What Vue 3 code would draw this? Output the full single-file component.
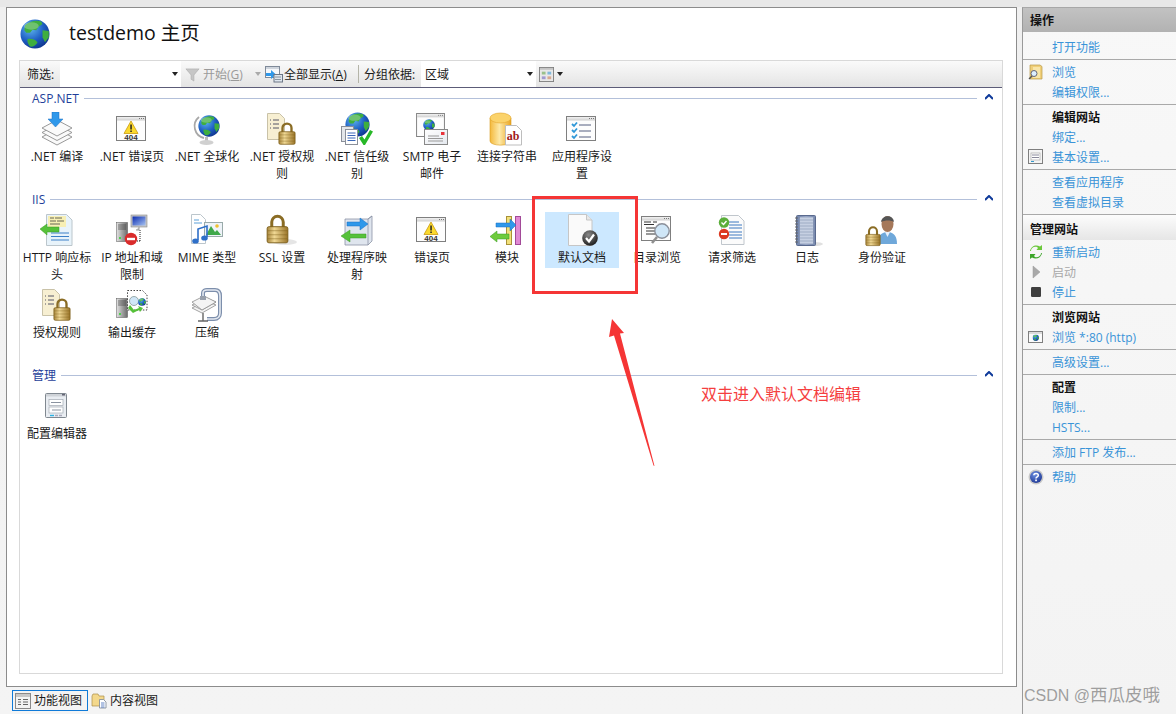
<script setup>
const groups = [
  { title: 'ASP.NET', items: [
    ['.NET 编译', 'compile'], ['.NET 错误页', 'err'], ['.NET 全球化', 'globestand'], ['.NET 授权规则', 'doclock'],
    ['.NET 信任级别', 'trust'], ['SMTP 电子邮件', 'smtp'], ['连接字符串', 'conn'], ['应用程序设置', 'appset'],
  ] },
  { title: 'IIS', items: [
    ['HTTP 响应标头', 'http'], ['IP 地址和域限制', 'ip'], ['MIME 类型', 'mime'], ['SSL 设置', 'ssl'],
    ['处理程序映射', 'handler'], ['错误页', 'err'], ['模块', 'module'], ['默认文档', 'defdoc', true],
    ['目录浏览', 'dirbrowse'], ['请求筛选', 'reqfilter'], ['日志', 'log'], ['身份验证', 'auth'],
    ['授权规则', 'doclock'], ['输出缓存', 'cache'], ['压缩', 'compress'],
  ] },
  { title: '管理', items: [['配置编辑器', 'config']] },
]
const actions = [
  { rows: [{ t: '打开功能' }] },
  { rows: [{ t: '浏览', i: 'a-folder' }, { t: '编辑权限...' }] },
  { rows: [{ t: '编辑网站', b: 1 }, { t: '绑定...' }, { t: '基本设置...', i: 'a-settings' }] },
  { rows: [{ t: '查看应用程序' }, { t: '查看虚拟目录' }] },
  { band: '管理网站', rows: [{ t: '重新启动', i: 'a-restart' }, { t: '启动', i: 'a-play', g: 1 }, { t: '停止', i: 'a-stop' }] },
  { rows: [{ t: '浏览网站', b: 1 }, { t: '浏览 *:80 (http)', i: 'a-browse' }] },
  { rows: [{ t: '高级设置...' }] },
  { rows: [{ t: '配置', b: 1 }, { t: '限制...' }, { t: 'HSTS...' }] },
  { rows: [{ t: '添加 FTP 发布...' }] },
  { rows: [{ t: '帮助', i: 'a-help' }], last: true },
]
</script>

<template>
  <svg class="defs" width="0" height="0" aria-hidden="true">
    <defs>
      <radialGradient id="gGlobe" cx="0.35" cy="0.3" r="0.8"><stop offset="0" stop-color="#5fb6ee"/><stop offset="0.55" stop-color="#1f5fc4"/><stop offset="1" stop-color="#0d2f86"/></radialGradient>
      <linearGradient id="gGold" x1="0" y1="0" x2="1" y2="0"><stop offset="0" stop-color="#a8863c"/><stop offset="0.35" stop-color="#f0d894"/><stop offset="1" stop-color="#9a7428"/></linearGradient>
      <linearGradient id="gCyl" x1="0" y1="0" x2="1" y2="0"><stop offset="0" stop-color="#f4b93c"/><stop offset="0.45" stop-color="#fde9a8"/><stop offset="1" stop-color="#eba51f"/></linearGradient>
      <linearGradient id="gPaper" x1="0" y1="0" x2="1" y2="1"><stop offset="0" stop-color="#ffffff"/><stop offset="1" stop-color="#e4e8ee"/></linearGradient>
      <linearGradient id="gBar" x1="0" y1="0" x2="0" y2="1"><stop offset="0" stop-color="#f2f2f2"/><stop offset="1" stop-color="#cfcfcf"/></linearGradient>
      <linearGradient id="gServer" x1="0" y1="0" x2="1" y2="0"><stop offset="0" stop-color="#e4e4e4"/><stop offset="0.5" stop-color="#a4a4a4"/><stop offset="1" stop-color="#6c6c6c"/></linearGradient>
      <linearGradient id="gBook" x1="0" y1="0" x2="1" y2="0"><stop offset="0" stop-color="#6b7fa8"/><stop offset="0.5" stop-color="#a9b7d2"/><stop offset="1" stop-color="#7587ad"/></linearGradient>
      <linearGradient id="gMono" x1="0" y1="0" x2="1" y2="1"><stop offset="0" stop-color="#0a2bb0"/><stop offset="1" stop-color="#a8c4f2"/></linearGradient>
      <radialGradient id="gBadge" cx="0.4" cy="0.3" r="0.8"><stop offset="0" stop-color="#8a8a8a"/><stop offset="1" stop-color="#111"/></radialGradient>
      <radialGradient id="gHelp" cx="0.4" cy="0.3" r="0.8"><stop offset="0" stop-color="#6c8fe0"/><stop offset="1" stop-color="#17308f"/></radialGradient>
    </defs>

    <symbol id="globe" viewBox="0 0 24 24">
      <circle cx="12" cy="12" r="11.6" fill="url(#gGlobe)"/>
      <path d="M4 5c3-3 9-4.500 13-3l1 2-3 2-2 3-3-.5-2 2.500-3 0-1.500-2z" fill="#3fae3f"/>
      <path d="M6 16c3-.5 7 .5 8 3-2 2.500-4 3.500-6 3-1.500-2-2.500-4-2-6z" fill="#3fae3f"/>
      <path d="M18 9l5 .5 0 5-3 4-2-4z" fill="#3fae3f"/>
      <ellipse cx="9" cy="5.500" rx="6" ry="3" fill="#fff" opacity=".25"/>
    </symbol>
    <symbol id="lock" viewBox="0 0 20 26">
      <path d="M5 12V7a5 5 0 0 1 10 0v5" fill="none" stroke="#8a6c24" stroke-width="2.600"/>
      <rect x="1" y="11" width="18" height="14" rx="1.500" fill="url(#gGold)" stroke="#7a5c16" stroke-width=".8"/>
      <path d="M1.500 14.500h17M1.500 18h17M1.500 21.500h17" stroke="#7a5c16" stroke-width=".7" opacity=".55"/>
    </symbol>
    <symbol id="win" viewBox="0 0 30 25">
      <rect x=".5" y=".5" width="29" height="24" fill="#fdfdfd" stroke="#7f7f7f"/>
      <rect x="1" y="1" width="28" height="3.500" fill="url(#gBar)"/>
      <path d="M23 2.500h1M25 2.500h1M27 2.500h1" stroke="#777"/>
    </symbol>
    <symbol id="err" viewBox="0 0 36 36">
      <use href="#win" x="2" y="4" width="30" height="25"/>
      <path d="M17 9l7 12.500H10z" fill="#fbd92e" stroke="#c99a10" stroke-width=".8"/>
      <rect x="16.300" y="12.500" width="1.500" height="5" fill="#222"/><rect x="16.300" y="18.500" width="1.500" height="1.500" fill="#222"/>
    </symbol>
    <symbol id="compile" viewBox="0 0 36 36">
      <g fill="#fafafa" stroke="#8d8d8d" stroke-width=".9">
        <path d="M3 25l15-8 15 8-15 8z"/><path d="M3 20.500l15-8 15 8-15 8z"/><path d="M3 16l15-8 15 8-15 8z"/>
      </g>
      <path d="M13 0h7v7h4l-7.500 8L9 7h4z" fill="#2f98ea" stroke="#1a6fc0" stroke-width=".5"/>
    </symbol>
    <symbol id="globestand" viewBox="0 0 36 36">
      <path d="M10 5a12 12 0 0 0 5 21" fill="none" stroke="#a8a8a8" stroke-width="1.800"/>
      <rect x="16" y="25" width="3" height="4" fill="#bdbdbd"/><ellipse cx="17.500" cy="30.500" rx="7" ry="2.500" fill="#d0d0d0"/>
      <use href="#globe" x="9" y="3" width="22" height="22"/>
    </symbol>
    <symbol id="doclock" viewBox="0 0 36 36">
      <path d="M3.500 1.500h12l5 5v21h-17z" fill="#f7efd2" stroke="#c9c2a8"/>
      <path d="M6 8h1M6 12h1M6 16h1M9 8h6M9 12h6M9 16h6" stroke="#556" stroke-width="1"/>
      <use href="#lock" x="14" y="9" width="18" height="25"/>
    </symbol>
    <symbol id="trust" viewBox="0 0 36 36">
      <use href="#globe" x="6" y="0" width="25" height="25"/>
      <rect x="2.500" y="14.500" width="12" height="15" fill="#e3e6ea" stroke="#8a8f99"/>
      <rect x="6.500" y="17.500" width="12" height="15" fill="#fff" stroke="#8a8f99"/>
      <path d="M8.500 21h8M8.500 23.500h8M8.500 26h8M8.500 28.500h8" stroke="#3c68b8"/>
      <path d="M20 26l3-2 2.500 3.500L31 18l3 1.500L26 33h-1.500z" fill="#28b828"/>
    </symbol>
    <symbol id="smtp" viewBox="0 0 36 36">
      <use href="#win" x="2" y="1" width="29" height="24"/>
      <use href="#globe" x="9" y="7" width="12" height="12"/>
      <rect x="10.500" y="17.500" width="23" height="15" fill="url(#gPaper)" stroke="#888"/>
      <rect x="27" y="20" width="3.500" height="3" fill="#e8323a"/>
      <path d="M14 24h11M14 26.500h15M14 29h15" stroke="#999"/>
    </symbol>
    <symbol id="conn" viewBox="0 0 36 36">
      <path d="M1 6v23c0 5.500 21 5.500 21 0V6z" fill="url(#gCyl)" stroke="#d99b1e" stroke-width=".6"/>
      <ellipse cx="11.500" cy="6" rx="10.500" ry="5" fill="#fbd36b" stroke="#e3a52a" stroke-width=".6"/>
      <path d="M16.500 13.500h11l5 5v14.500h-16z" fill="#fff" stroke="#bdbdbd"/>
    </symbol>
    <symbol id="appset" viewBox="0 0 36 36">
      <use href="#win" x="2" y="4" width="30" height="25"/>
      <path d="M8 12l2 2 3-3.500M8 18l2 2 3-3.500M8 24l2 2 3-3.500" fill="none" stroke="#2f98d8" stroke-width="1.800"/>
      <path d="M15 13h12M15 19h12M15 25h12" stroke="#555e80"/>
    </symbol>
    <symbol id="http" viewBox="0 0 36 36">
      <path d="M7.500 1.500h20l5.500 5.500v25.500H7.500z" fill="#e8f3fa" stroke="#bcc6cc"/>
      <path d="M9 3h18v11H9z" fill="#f7efb4"/>
      <path d="M11 5h4M16 5h7M11 8h6M18 8h7M11 11h10" stroke="#665" stroke-width="1"/>
      <path d="M12 20h18M12 23.500h18M12 27h18" stroke="#3c80c8"/>
      <path d="M1 16l7-5v3h12v5H8v3z" fill="#56c13a" stroke="#3b9a24" stroke-width=".5"/>
    </symbol>
    <symbol id="server" viewBox="0 0 12 20">
      <rect x=".5" y=".5" width="11" height="19" fill="url(#gServer)" stroke="#555" stroke-width=".5"/>
      <path d="M2 3h8M2 5h8M2 7h8" stroke="#333" stroke-width=".6"/><rect x="3" y="15" width="2" height="2" fill="#4ed04e"/>
    </symbol>
    <symbol id="ip" viewBox="0 0 36 36">
      <use href="#server" x="2" y="9" width="12" height="20"/>
      <rect x="17" y="2" width="16" height="12" fill="#c8c8c8" stroke="#888" stroke-width=".6"/>
      <rect x="18.500" y="3.500" width="13" height="9" fill="url(#gMono)"/>
      <path d="M25 14v3h-3" fill="#ccc" stroke="#999"/>
      <path d="M26 17v11M13 28h13" stroke="#222" stroke-dasharray="1 1" fill="none"/>
      <circle cx="17" cy="26" r="6.200" fill="#d92b2b"/><rect x="13" y="24.800" width="8" height="2.400" fill="#fff"/>
    </symbol>
    <symbol id="mime" viewBox="0 0 36 36">
      <path d="M2.500 1.500h9l5 5v24h-14z" fill="#fff" stroke="#bcc6cc"/>
      <path d="M5 7h5M5 10h8" stroke="#5aa0d8"/>
      <rect x="15.500" y="9.500" width="18" height="14" fill="#eef3f8" stroke="#9aa"/>
      <path d="M17 22l5-9 4 6 2-2 4 5z" fill="#3fa84a"/><circle cx="28" cy="13" r="1.800" fill="#f0c030"/>
      <path d="M9 27V16l9-3v11" fill="none" stroke="#2e6fc8" stroke-width="1.600"/>
      <ellipse cx="6.500" cy="28" rx="3.300" ry="2.600" fill="#2e6fc8"/><ellipse cx="15.500" cy="25" rx="3.300" ry="2.600" fill="#2e6fc8"/>
    </symbol>
    <symbol id="ssl" viewBox="0 0 36 36">
      <ellipse cx="21" cy="29" rx="12" ry="3" fill="#000" opacity=".1"/>
      <use href="#lock" x="2" y="1" width="23" height="30"/>
    </symbol>
    <symbol id="handler" viewBox="0 0 36 36">
      <path d="M6 6h23l4-3v25l-4 4H6z" fill="#dfe5ee" stroke="#8a93a4" stroke-width=".8"/>
      <path d="M29 6v26M29 6l4-3" stroke="#8a93a4" fill="none" stroke-width=".8"/>
      <path d="M8 9h13V5l8 6-8 6v-4H8z" fill="#2f98ea" stroke="#1a6fc0" stroke-width=".5"/>
      <path d="M27 21H11v-4l-9 6 9 6v-4h16z" fill="#56c13a" stroke="#3b9a24" stroke-width=".5"/>
    </symbol>
    <symbol id="module" viewBox="0 0 36 36">
      <rect x="17.500" y="3.500" width="5" height="28" fill="#f2e07a" stroke="#a89238"/>
      <rect x="26.500" y="3.500" width="5" height="28" fill="#e089d4" stroke="#a24a98"/>
      <path d="M7 10h14V6l6 6-6 6v-4H7z" fill="#2f98ea" stroke="#1a6fc0" stroke-width=".5"/>
      <path d="M20 21H8v-3l-7 5.500L8 29v-3h12z" fill="#6ecb3c" stroke="#3b9a24" stroke-width=".5"/>
    </symbol>
    <symbol id="defdoc" viewBox="0 0 36 36">
      <path d="M4.500 1.500h18l5.500 5.500v25.500H4.500z" fill="#fafafa" stroke="#c6c6c6"/>
      <path d="M22.500 1.500v5.500H28" fill="#e8e8e8" stroke="#c6c6c6"/>
      <circle cx="26" cy="25" r="7.800" fill="url(#gBadge)"/>
      <path d="M22 25l3 3.500 5-7" fill="none" stroke="#fff" stroke-width="2.200"/>
    </symbol>
    <symbol id="dirbrowse" viewBox="0 0 36 36">
      <use href="#win" x="2" y="3" width="30" height="25"/>
      <path d="M5 9h7M14 9h4M5 11.500h10M7 15h9M7 18h9M7 21h9" stroke="#333"/>
      <circle cx="23" cy="18" r="7.200" fill="#cfe6f7" stroke="#8a8f99" stroke-width="1.400"/>
      <path d="M18 24l-5 6" stroke="#8f8f8f" stroke-width="2.600"/>
    </symbol>
    <symbol id="reqfilter" viewBox="0 0 36 36">
      <path d="M7.500 2.500h17l5.500 5.500v23.500H7.500z" fill="#fbfbfb" stroke="#c0c6cc"/>
      <path d="M15 9h10M15 12h13M15 15h13M15 19h13M15 22h13M15 25h13" stroke="#3c78c0"/>
      <circle cx="10" cy="9.500" r="5.200" fill="#5aae3a"/><path d="M7.500 9.500l2 2 3-3.500" fill="none" stroke="#fff" stroke-width="1.400"/>
      <circle cx="10" cy="21" r="5.200" fill="#dc3a22"/><rect x="7" y="20" width="6" height="2" fill="#fff"/>
    </symbol>
    <symbol id="log" viewBox="0 0 36 36">
      <ellipse cx="25" cy="31" rx="9" ry="2" fill="#000" opacity=".12"/>
      <rect x="7.500" y="2.500" width="19" height="30" rx="1" fill="url(#gBook)" stroke="#5a6a8e"/>
      <rect x="10.500" y="4" width="14" height="27" fill="#c6d0e2" stroke="#6a7a9e" stroke-width=".5"/>
      <path d="M11 7h13M11 10h13M11 13h13M11 16h13M11 19h13M11 22h13M11 25h13M11 28h13" stroke="#8594b4" stroke-width=".6"/>
      <path d="M6 5h3M6 8h3M6 11h3M6 14h3M6 17h3M6 20h3M6 23h3M6 26h3M6 29h3" stroke="#666" stroke-width="1"/>
    </symbol>
    <symbol id="auth" viewBox="0 0 36 36">
      <path d="M13 31c0-8 4-11 9-12h3c5 1 8 4 8 12z" fill="#6fa8da"/>
      <path d="M21 19l2.500 5 2.500-5z" fill="#e8f0fa"/>
      <ellipse cx="23.500" cy="11" rx="6" ry="8" fill="#a5785a"/>
      <path d="M17 9c1-7 12-8 13 0-3-2-9-2-13 0z" fill="#555"/>
      <use href="#lock" x="1" y="12" width="16" height="22"/>
    </symbol>
    <symbol id="cache" viewBox="0 0 36 36">
      <use href="#server" x="2" y="10" width="12" height="20"/>
      <path d="M13.500 2.500h15l4.500 4.500v15H13.500z" fill="#fff" stroke="#444" stroke-dasharray="1.500 1.500"/>
      <circle cx="20" cy="13" r="4.500" fill="#cfe6f7" stroke="#9aa"/>
      <use href="#globe" x="24" y="10" width="8" height="8"/>
      <path d="M16 17l4 5 5-2-1-2 5 2-3 4-1-2-6 3-5-5z" fill="#56c13a"/>
    </symbol>
    <symbol id="compress" viewBox="0 0 36 36">
      <g fill="#f4f4f4" stroke="#8d8d8d" stroke-width=".8"><path d="M3 20l14-7 10 4-14 8z"/><path d="M3 17l14-7 10 4-14 8z"/><path d="M3 14l12-6 12 6-14 8z"/></g>
      <path d="M14 9V5c0-2 2-3 4-3h8c4 0 5 3 5 6v17c0 3-2 6-6 6h-7" fill="none" stroke="#7d8fac" stroke-width="4"/>
      <path d="M14 9V5c0-2 2-3 4-3h8c4 0 5 3 5 6v17c0 3-2 6-6 6h-7" fill="none" stroke="#e4e9f1" stroke-width="1.600"/>
      <rect x="11" y="8" width="6" height="4" fill="#98a0ac"/>
      <path d="M14 25v8M9 33h10" stroke="#666" stroke-width="1.400"/>
    </symbol>
    <symbol id="config" viewBox="0 0 36 36">
      <rect x="6.500" y="4.500" width="21" height="24" rx="1" fill="#e9edf2" stroke="#808890"/>
      <rect x="7" y="5" width="20" height="2.500" fill="#cfd3d8"/><rect x="23" y="5" width="3" height="1.500" fill="#667"/>
      <rect x="10" y="10.500" width="14" height="6" fill="#fff" stroke="#a4abb4" stroke-width=".7"/>
      <rect x="10" y="18" width="14" height="6" fill="#fff" stroke="#a4abb4" stroke-width=".7"/>
      <path d="M12 13.500h10M13 21h9" stroke="#8a93a0"/>
      <path d="M11 26.500h4" stroke="#2db4e4" stroke-width="1.400"/><path d="M16 26.500h3M20 26.500h3" stroke="#aab" stroke-width="1.400"/>
    </symbol>

    <symbol id="a-folder" viewBox="0 0 16 16">
      <path d="M2 1h10l2 1.500V15H2z" fill="#f0cf78" stroke="#b89a48" stroke-width=".7"/>
      <path d="M5 3h7v11H5z" fill="#f9e6a8"/>
      <circle cx="6" cy="9.500" r="3" fill="#dcefff" stroke="#667" stroke-width="1"/>
      <path d="M4 12l-3 3" stroke="#555" stroke-width="1.500"/>
    </symbol>
    <symbol id="a-settings" viewBox="0 0 16 16">
      <rect x=".5" y=".5" width="14" height="14" fill="#f4f4f4" stroke="#7f7f7f"/>
      <rect x="3" y="4" width="9" height="7" fill="#fff" stroke="#a8a8a8" stroke-width=".7"/>
      <path d="M4 6h7M4 8.500h7" stroke="#889"/><path d="M3 12.500h3" stroke="#39c" stroke-width="1"/>
    </symbol>
    <symbol id="a-restart" viewBox="0 0 16 16">
      <path d="M3 7c0-3 3-5 6-4l1 1-1.500 2H14V1l-2 1.500C8 0 3 2 2 7z" fill="#6cc83c"/>
      <path d="M13 9c0 3-3 5-6 4l-1-1 1.500-2H2v5l2-1.500c4 2.500 9 .5 10-4.500z" fill="#3da62a"/>
    </symbol>
    <symbol id="a-play" viewBox="0 0 16 16"><path d="M5 2l7 6-7 6z" fill="#a9a9a9" stroke="#999" stroke-width=".5"/></symbol>
    <symbol id="a-stop" viewBox="0 0 16 16"><rect x="3" y="3" width="10" height="10" rx="1.200" fill="#3f3f3f"/></symbol>
    <symbol id="a-browse" viewBox="0 0 16 16">
      <rect x=".5" y="2.500" width="14" height="11" fill="#fbfbfb" stroke="#7f7f7f"/>
      <rect x="1" y="3" width="13" height="2" fill="#dcdcdc"/>
      <use href="#globe" x="4.500" y="5.500" width="6.500" height="6.500"/>
    </symbol>
    <symbol id="a-help" viewBox="0 0 16 16">
      <circle cx="8" cy="8" r="7.500" fill="#c8c8c8"/><circle cx="8" cy="8" r="6" fill="url(#gHelp)"/>
      <path d="M5.800 6.200C6 3.800 10.300 3.800 10.300 6.200 10.300 7.800 8 7.800 8 9.500" fill="none" stroke="#fff" stroke-width="1.500"/>
      <rect x="7.200" y="10.500" width="1.700" height="1.700" fill="#fff"/>
    </symbol>
    <symbol id="t-funnel" viewBox="0 0 16 16">
      <path d="M1 2h14L9.500 8.500V15l-3-2V8.500z" fill="#c6c6c6" stroke="#aaa" stroke-width=".6"/>
    </symbol>
    <symbol id="t-showall" viewBox="0 0 18 18">
      <rect x=".5" y="1.500" width="14" height="11" fill="#f6f8fb" stroke="#7f8a99"/>
      <rect x="1" y="2" width="13" height="2" fill="#cfd5dd"/>
      <path d="M1 8h5V5l5 4.500-5 4.500v-3H1z" fill="#2f98ea"/>
      <rect x="9" y="9.500" width="8.500" height="7.500" fill="#dfe6ee" stroke="#6c7786"/>
      <path d="M10.500 12h1M12.500 12h1M14.500 12h1M10.500 14.500h1M12.500 14.500h1M14.500 14.500h1" stroke="#345"/>
    </symbol>
    <symbol id="t-view" viewBox="0 0 16 16">
      <rect x=".5" y=".5" width="15" height="15" fill="#e8e8e8" stroke="#808080"/>
      <rect x="1" y="1" width="14" height="2" fill="#c4c4c4"/>
      <rect x="3" y="5" width="4" height="3" fill="#9ac08a"/><rect x="9" y="5" width="4" height="3" fill="#7fb8dc"/>
      <rect x="3" y="10" width="4" height="3" fill="#a09ad0"/><rect x="9" y="10" width="4" height="3" fill="#d8a890"/>
    </symbol>
    <symbol id="b-feature" viewBox="0 0 16 16">
      <rect x=".5" y=".5" width="15" height="15" fill="#f4f4f4" stroke="#8a8a8a"/>
      <rect x="1" y="1" width="14" height="3" fill="#c8c8c8"/>
      <path d="M3 6.500h3M3 9h3M3 11.500h3M8 6.500h5M8 9h5M8 11.500h5" stroke="#666"/>
    </symbol>
    <symbol id="b-content" viewBox="0 0 16 16">
      <path d="M1 3l1-2h5l1 2h5v10H1z" fill="#f3d88c" stroke="#a98c48" stroke-width=".7"/>
      <path d="M8.500 6.500h4l2.500 2.500v6H8.500z" fill="#fff" stroke="#7a8696" stroke-width=".8"/>
      <path d="M10 10h3.500M10 12h3.500M10 14h3.500" stroke="#3c68b8" stroke-width=".8"/>
    </symbol>
  </svg>

  <div class="app">
    <div class="left">
      <main class="main">
        <header class="head">
          <svg class="head-icon" width="32" height="32"><use href="#globe" width="30" height="30" x="1" y="1"/></svg>
          <h1 class="title">testdemo 主页</h1>
        </header>
        <section class="inner">
          <div class="toolbar">
            <span class="lbl lbl-filter">筛选:</span>
            <span class="combo combo-filter"><i class="arrow dark"></i></span>
            <svg class="ti ti-funnel" width="15" height="15"><use href="#t-funnel" width="15" height="15"/></svg>
            <span class="lbl lbl-start">开始(<u>G</u>)</span>
            <i class="arrow light arrow-start"></i>
            <svg class="ti ti-show" width="18" height="18"><use href="#t-showall" width="18" height="18"/></svg>
            <span class="lbl lbl-all">全部显示(<u>A</u>)</span>
            <i class="tsep"></i>
            <span class="lbl lbl-group">分组依据:</span>
            <span class="combo combo-group"><span class="combo-text">区域</span><i class="arrow dark"></i></span>
            <svg class="ti ti-view" width="15" height="15"><use href="#t-view" width="15" height="15"/></svg>
            <i class="arrow dark arrow-view"></i>
          </div>
          <div class="content">
            <div v-for="g in groups" :key="g.title" class="group">
              <div class="group-head">
                <span class="group-title">{{ g.title }}</span>
                <i class="group-line"></i>
                <svg class="chev" width="8" height="6" viewBox="0 0 8 6"><path d="M0 5l4-4 4 4" fill="none" stroke="#0f3a9a" stroke-width="2"/></svg>
              </div>
              <div class="grid">
                <div v-for="it in g.items" :key="it[0]" class="cell">
                  <div class="tile" :class="{ sel: it[2] }">
                    <svg class="tile-icon" width="36" height="36">
                      <use :href="'#' + it[1]" width="36" height="36"/>
                      <text v-if="it[1] === 'err'" x="17" y="28" class="t404">404</text>
                      <text v-if="it[1] === 'conn'" x="24" y="28" class="tabc">ab</text>
                    </svg>
                    <div class="tile-text">{{ it[0] }}</div>
                  </div>
                </div>
              </div>
            </div>
          </div>
        </section>
      </main>
      <footer class="tabs">
        <div class="tab tab-on"><svg width="16" height="16"><use href="#b-feature" width="16" height="16"/></svg><span>功能视图</span></div>
        <div class="tab"><svg width="16" height="16"><use href="#b-content" width="16" height="16"/></svg><span>内容视图</span></div>
      </footer>
    </div>

    <aside class="side">
      <div class="side-head">操作</div>
      <div class="side-body">
        <template v-for="(s, i) in actions" :key="i">
          <div v-if="s.band" class="band">{{ s.band }}</div>
          <div class="sec" :class="{ last: s.last }">
            <div v-for="r in s.rows" :key="r.t" class="row" :class="{ bold: r.b, gray: r.g }">
              <span class="row-ic"><svg v-if="r.i" width="16" height="16"><use :href="'#' + r.i" width="16" height="16"/></svg></span>
              <span>{{ r.t }}</span>
            </div>
          </div>
        </template>
      </div>
    </aside>

    <i class="redbox"></i>
    <svg class="redarrow" width="60" height="152" viewBox="0 0 60 152"><path d="M7 0L19 14 15 14.500 49.500 147 48.500 146.500 9 16.500 4 18z" fill="#f53535"/></svg>
    <span class="note">双击进入默认文档编辑</span>
    <span class="mark"><span class="mark-a">CSDN @</span>西瓜皮哦</span>
  </div>
</template>

<style>
html, body { margin: 0; overflow: hidden; background: #f0f0f0; }
</style>

<style scoped>
.defs { position: absolute; }
.t404 { font: 700 8px "Liberation Sans", sans-serif; text-anchor: middle; fill: #333; }
.tabc { font: 700 12px "Liberation Serif", serif; text-anchor: middle; fill: #a01818; }
.app {
  position: relative; display: flex; width: 1176px; height: 714px; padding: 7px 0 0 6px; box-sizing: border-box;
  background: linear-gradient(#e8e8e8 0, #e8e8e8 7px, #f0f0f0 7px, #f4f4f4 100%);
  font: 12px/17px "Open Sans", "Noto Sans CJK SC", sans-serif; color: #1a1a1a; overflow: hidden;
}
.left { width: 1011px; flex: none; margin-right: 5px; }
.main { height: 680px; box-sizing: border-box; border: 1px solid #8c8c8c; background: #fff; display: flex; flex-direction: column; }
.head { height: 52px; flex: none; display: flex; align-items: center; padding-left: 12px; padding-bottom: 2px; box-sizing: border-box; }
.head-icon { flex: none; margin-top: 2px; }
.title { margin: 0 0 0 18px; font: 400 19.5px/26px "Open Sans", "Noto Sans CJK SC", sans-serif; color: #111; }
.inner { flex: 1; margin: 0 13px 12px 12px; border: 1px solid #d9d9d9; display: flex; flex-direction: column; min-height: 0; }
.toolbar { height: 27px; flex: none; box-sizing: border-box; display: flex; align-items: center; border-bottom: 1px solid #5c5c78; background: linear-gradient(#fafafa, #e4e4e4); }
.lbl { flex: none; white-space: nowrap; }
.lbl-filter { margin-left: 7px; width: 33px; }
.combo { flex: none; height: 26px; background: #fff; display: flex; align-items: center; justify-content: flex-end; box-sizing: border-box; position: relative; }
.combo-filter { width: 121px; padding-right: 3px; }
.combo-group { width: 115px; padding-right: 3px; }
.combo-text { position: absolute; left: 4px; }
.arrow { flex: none; width: 0; height: 0; border: 3.5px solid transparent; border-bottom: 0; border-top-width: 4px; }
.arrow.dark { border-top-color: #222; }
.arrow.light { border-top-color: #aaa; }
.ti { flex: none; }
.ti-funnel { margin-left: 4px; }
.lbl-start { margin-left: 3px; width: 40px; color: #9a9a9a; }
.arrow-start { margin-left: 12px; }
.ti-show { margin-left: 4px; }
.lbl-all { margin-left: 1px; width: 65px; }
.tsep { flex: none; width: 1px; height: 18px; margin: 0 5px 0 9px; background: #b4b4a8; }
.lbl-group { width: 57px; }
.ti-view { margin-left: 3px; }
.arrow-view { margin-left: 3px; }
.content { flex: 1; margin-top: -3px; }
.group-head { height: 26px; display: flex; align-items: center; }
.group-title { margin-left: 12px; color: #1f3f9a; flex: none; }
.group-line { flex: 1; height: 1px; margin-left: 5px; background: #b3c0da; }
.chev { flex: none; margin: -2px 9px 0 8px; }
.grid { display: flex; flex-wrap: wrap; width: 900px; }
.cell { width: 75px; height: 75px; flex: none; }
.tile { width: 74px; padding-top: 1px; padding-bottom: 2px; text-align: center; box-sizing: border-box; }
.tile.sel { background: #cce8ff; }
.tile-icon { display: block; margin: 0 auto; }
.tile-text { padding: 0 2px; line-height: 17px; word-break: break-all; }
.tabs { display: flex; align-items: center; height: 24px; padding: 3px 0 0 6px; box-sizing: border-box; }
.tab { display: flex; align-items: center; gap: 3px; height: 21px; padding: 0 2px; box-sizing: border-box; border: 1px solid transparent; }
.tab svg { flex: none; }
.tab-on { border: 1px solid #0f7ad8; width: 76px; }
.side { flex: 1; border-left: 1px solid #9a9a9a; border-top: 1px solid #a8a8a8; background: linear-gradient(#f8f8f8, #f3f3f3); min-width: 0; }
.side-head { height: 24px; line-height: 26px; padding-left: 7px; font-weight: 700; color: #111; background: linear-gradient(#c2c2c2, #b2b2b2); }
.side-body { padding-top: 5px; }
.sec { padding: 0 0 2px; margin-bottom: 2px; border-bottom: 1px solid #a9a9a9; }
.sec.last { border: 0; }
.row { height: 20px; display: flex; align-items: center; color: #3a94d8; white-space: nowrap; }
.row.bold { color: #111; font-weight: 700; }
.row.gray { color: #a8a8a8; }
.row-ic { width: 16px; height: 16px; flex: none; margin: 0 8px 0 5px; }
.row-ic svg { display: block; }
.band { height: 25px; line-height: 29px; margin-top: -2px; margin-bottom: 2px; padding-left: 7px; font-weight: 700; color: #111; background: linear-gradient(#fcfcfc, #e6e6e6); }
.redbox { position: absolute; left: 532px; top: 196px; width: 106px; height: 98px; box-sizing: border-box; border: 3px solid #f53535; }
.redarrow { position: absolute; left: 605px; top: 319px; }
.note { position: absolute; left: 701px; top: 384px; font-size: 16px; line-height: 20px; color: #f53f3f; white-space: nowrap; }
.mark { position: absolute; left: 1024px; top: 684px; font: 17.5px/22px "Liberation Sans", "Noto Sans CJK SC", sans-serif; color: rgba(120, 120, 120, .7); white-space: nowrap; }
.mark-a { font-size: 16px; }
</style>
